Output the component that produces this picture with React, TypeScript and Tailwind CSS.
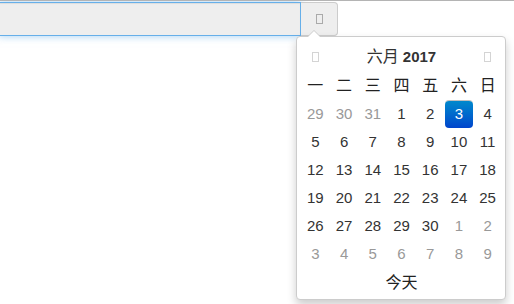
import React from 'react';

const weeks: { d: number; muted?: boolean; active?: boolean }[][] = [
  [{ d: 29, muted: true }, { d: 30, muted: true }, { d: 31, muted: true }, { d: 1 }, { d: 2 }, { d: 3, active: true }, { d: 4 }],
  [{ d: 5 }, { d: 6 }, { d: 7 }, { d: 8 }, { d: 9 }, { d: 10 }, { d: 11 }],
  [{ d: 12 }, { d: 13 }, { d: 14 }, { d: 15 }, { d: 16 }, { d: 17 }, { d: 18 }],
  [{ d: 19 }, { d: 20 }, { d: 21 }, { d: 22 }, { d: 23 }, { d: 24 }, { d: 25 }],
  [{ d: 26 }, { d: 27 }, { d: 28 }, { d: 29 }, { d: 30 }, { d: 1, muted: true }, { d: 2, muted: true }],
  [3, 4, 5, 6, 7, 8, 9].map((d) => ({ d, muted: true })),
];

const dayNames = ['一', '二', '三', '四', '五', '六', '日'];

const Tofu = ({ className }: { className?: string }) => (
  <span className={`inline-block w-[7px] h-[10px] border border-current ${className ?? ''}`} />
);

export default function App() {
  return (
    <div
      className="relative w-[514px] h-[304px] bg-white border-t border-[#b4b4b4] overflow-hidden text-[15px] text-[#333]"
      style={{ fontFamily: '"Liberation Sans", "Noto Sans CJK SC", sans-serif' }}
    >
      <div className="flex mt-px">
        <input
          readOnly
          className="-ml-[2px] w-[303px] h-[34px] bg-[#eee] border border-[#66afe9] outline-none shadow-[inset_0_1px_1px_rgba(0,0,0,0.075),0_0_8px_rgba(102,175,233,0.6)]"
        />
        <button className="w-[37px] h-[34px] bg-[#eee] border border-l-0 border-[#ccc] rounded-r flex items-center justify-center text-[#aaa]">
          <Tofu />
        </button>
      </div>

      <div className="absolute left-[296px] top-[35px] w-[210px] h-[264px] bg-white border border-[#ccc] rounded shadow-[0_5px_10px_rgba(0,0,0,0.2)] px-[4px] pt-[6px]">
        <div className="absolute -top-[7px] left-[10px] w-0 h-0 border-l-[7px] border-r-[7px] border-b-[7px] border-l-transparent border-r-transparent border-b-[#ccc]" />
        <div className="absolute -top-[6px] left-[11px] w-0 h-0 border-l-[6px] border-r-[6px] border-b-[6px] border-l-transparent border-r-transparent border-b-white" />

        <div className="grid grid-cols-7 w-[201px]">
          <div className="h-[28px] flex items-center justify-center text-[#d4d4d4]">
            <Tofu />
          </div>
          <div className="col-span-5 h-[28px] flex items-center justify-center gap-[4px]">
            <span className="text-[16px]">六月</span>
            <span className="font-bold">2017</span>
          </div>
          <div className="h-[28px] flex items-center justify-center text-[#d4d4d4]">
            <Tofu />
          </div>

          {dayNames.map((n) => (
            <div key={n} className="h-[29px] flex items-center justify-center text-[16px] text-[#222]">
              {n}
            </div>
          ))}

          {weeks.flat().map((c, i) => (
            <div key={i} className="h-[28px] flex items-center justify-center">
              {c.active ? (
                <span className="w-full h-[27px] flex items-center justify-center rounded text-white bg-gradient-to-b from-[#0088cc] to-[#0044cc] shadow-[0_-1px_0_rgba(0,0,0,0.25)]">
                  {c.d}
                </span>
              ) : (
                <span className={c.muted ? 'text-[#999]' : ''}>{c.d}</span>
              )}
            </div>
          ))}

          <div className="col-span-7 h-[29px] flex items-center justify-center text-[16px] text-[#222]">今天</div>
        </div>
      </div>
    </div>
  );
}
